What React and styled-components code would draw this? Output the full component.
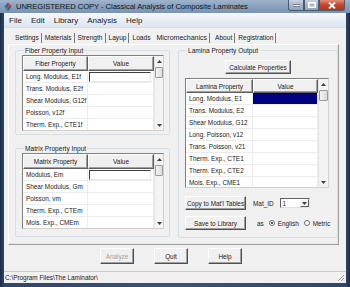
import React from 'react';
import styled, { createGlobalStyle } from 'styled-components';

const Global = createGlobalStyle`
  html, body { margin: 0; padding: 0; }
  body { width: 350px; height: 287px; overflow: hidden; font-family: "Liberation Sans", Arial, sans-serif; }
  * { box-sizing: border-box; }
`;

const Window = styled.div`
  width: 350px;
  height: 287px;
  display: flex;
  flex-direction: column;
  background: linear-gradient(to right, #1c2c48 0, #2f4668 4px, #3b5274 50%, #2f4668 calc(100% - 4px), #1c2c48 100%);
`;

const TitleBar = styled.div`
  height: 13px;
  display: flex;
  align-items: center;
  padding-left: 3px;
  background: linear-gradient(to bottom, #9fb3cb 0%, #8aa2be 45%, #7a93b2 100%);
`;

const TitleText = styled.span`
  font-size: 7.6px;
  color: #101820;
  margin-left: 3px;
  white-space: nowrap;
  letter-spacing: -0.05px;
`;

const Caption = styled.div`
  margin-left: auto;
  display: flex;
  align-self: flex-start;
  margin-right: 5px;
`;

const CapBtn = styled.div`
  width: ${p => p.$w}px;
  height: 11px;
  display: flex;
  align-items: center;
  justify-content: center;
  border: 1px solid #4a5a70;
  border-top: none;
  background: ${p => p.$close
    ? 'linear-gradient(to bottom, #e08a78 0%, #c7442c 50%, #b43520 100%)'
    : 'linear-gradient(to bottom, #c6d2e0 0%, #a7b8cc 50%, #8ea3bd 100%)'};
  border-radius: ${p => p.$r || '0'};
`;

const Body = styled.div`
  flex: 1;
  margin: 0 4px;
  background: #f0f0f0;
  display: flex;
  flex-direction: column;
  color: #1a1a1a;
`;

const MenuBar = styled.div`
  height: 15px;
  display: flex;
  align-items: center;
  background: linear-gradient(to bottom, #f6f8fb 0%, #e9eef6 50%, #dce5f2 100%);
  border-bottom: 1px solid #d8dee8;
  padding-left: 2px;
`;

const MenuItem = styled.span`
  font-size: 8px;
  padding: 0 3px;
  margin-right: 3px;
`;

const TabStrip = styled.div`
  height: 16px;
  display: flex;
  align-items: center;
  padding-left: 8px;
  padding-top: 4px;
`;

const Tab = styled.span`
  height: 10px;
  line-height: 10px;
  padding: 0 2px 0 3px;
  border-right: ${p => (p.$nosep ? '1px solid transparent' : '1px solid #7a7a7a')};
  margin-right: ${p => (p.$sel ? 2 : 0)}px;
  font-size: ${p => (p.$sel ? '7px' : '6.6px')};
`;

const Panel = styled.div`
  height: 201px;
  margin: 0 7px 0 4px;
  border-left: 1px solid #ffffff;
  border-top: 1px solid #ffffff;
  border-right: 1px solid #a0a0a0;
  border-bottom: 1px solid #a0a0a0;
  box-shadow: inset -1px -1px 0 #e3e3e3;
  display: flex;
  gap: 8px;
  padding: 2px 0 0 6px;
`;

const Column = styled.div`
  display: flex;
  flex-direction: column;
  gap: ${p => p.$gap || 0}px;
  width: ${p => p.$w}px;
`;

const Group = styled.fieldset`
  margin: 0;
  border: 1px solid #d5dfe5;
  border-radius: 2px;
  padding: 0 0 0 6px;
  height: ${p => p.$h}px;
  min-width: 0;
  display: flex;
  flex-direction: column;
`;

const Legend = styled.legend`
  font-size: 6.6px;
  padding: 0 1px;
  margin-left: 2px;
  line-height: 7px;
`;

const Grid = styled.div`
  display: flex;
  border: 1px solid #808080;
  border-right-color: #d0d0d0;
  border-bottom-color: #d0d0d0;
  background: #fff;
  width: ${p => p.$w}px;
  height: ${p => p.$h}px;
  margin-top: ${p => p.$mt || 0}px;
  overflow: hidden;
`;

const Table = styled.div`
  flex: 1;
  display: grid;
  grid-template-columns: ${p => p.$cols};
  grid-auto-rows: 12px;
  grid-template-rows: ${p => p.$hh}px;
  align-content: start;
`;

const HeadCell = styled.div`
  font-size: 6.4px;
  display: flex;
  align-items: center;
  justify-content: center;
  background: #f0f0f0;
  border-top: 1px solid #fff;
  border-left: 1px solid #fff;
  border-right: 1px solid #606060;
  border-bottom: 1px solid #606060;
  box-shadow: inset -1px -1px 0 #a0a0a0;
`;

const Cell = styled.div`
  font-size: 6.4px;
  display: flex;
  align-items: center;
  padding-left: 3px;
  border-right: 1px solid #ececec;
  border-bottom: 1px solid #ececec;
  white-space: nowrap;
  overflow: hidden;
  background: ${p => (p.$sel ? '#000080' : '#fff')};
`;

const EditBox = styled.div`
  width: 100%;
  height: 10px;
  margin: 0 1px 0 -2px;
  border-top: 1px solid #404040;
  border-left: 1px solid #404040;
  border-bottom: 1px solid #e8e8e8;
  border-right: 1px solid #e8e8e8;
  background: #fff;
`;

const ScrollBar = styled.div`
  width: 11px;
  display: flex;
  flex-direction: column;
  background: #f3f3f3;
  border-left: 1px solid #e4e4e4;
`;

const Arrow = styled.div`
  height: 10px;
  display: flex;
  align-items: center;
  justify-content: center;
`;

const Thumb = styled.div`
  height: 11px;
  margin: 1px 0;
  border: 1px solid #9a9a9a;
  border-radius: 1px;
  background: linear-gradient(to right, #f4f4f4, #dcdcdc);
`;

const Track = styled.div`
  flex: 1;
`;

const Button = styled.div`
  width: ${p => p.$w}px;
  height: ${p => p.$h || 14}px;
  font-size: 6.4px;
  color: ${p => (p.$disabled ? '#a0a0a0' : '#1a1a1a')};
  display: flex;
  align-items: center;
  justify-content: center;
  background: #f0f0f0;
  border-top: 1px solid #fff;
  border-left: 1px solid #fff;
  border-right: 1px solid #505050;
  border-bottom: 1px solid #505050;
  box-shadow: inset -1px -1px 0 #a0a0a0;
  white-space: nowrap;
`;

const CalcRow = styled.div`
  display: flex;
  justify-content: center;
  padding-right: 6px;
  margin-top: 6px;
`;

const ControlRow = styled.div`
  display: flex;
  align-items: center;
  margin-top: ${p => p.$mt}px;
`;

const Label = styled.span`
  font-size: 6.4px;
  margin-left: ${p => p.$ml || 0}px;
  white-space: nowrap;
`;

const Select = styled.div`
  width: 30px;
  height: 10px;
  margin-left: 6px;
  display: flex;
  border-top: 1px solid #606060;
  border-left: 1px solid #606060;
  border-right: 1px solid #e0e0e0;
  border-bottom: 1px solid #e0e0e0;
  background: #fff;
  font-size: 6.4px;
  align-items: center;
`;

const SelectText = styled.span`
  flex: 1;
  padding-left: 2px;
`;

const DropBtn = styled.div`
  width: 9px;
  height: 100%;
  display: flex;
  align-items: center;
  justify-content: center;
  background: #f0f0f0;
  border-top: 1px solid #fff;
  border-left: 1px solid #fff;
  border-right: 1px solid #606060;
  border-bottom: 1px solid #606060;
`;

const Radio = styled.span`
  width: 6px;
  height: 6px;
  border-radius: 50%;
  border: 1px solid #707070;
  background: #fff;
  margin-left: ${p => p.$ml}px;
  margin-right: 3px;
  display: inline-flex;
  align-items: center;
  justify-content: center;
  &::after {
    content: '';
    width: 2px;
    height: 2px;
    border-radius: 50%;
    background: ${p => (p.$on ? '#202020' : 'transparent')};
  }
`;

const BottomRow = styled.div`
  display: flex;
  gap: 20px;
  padding-left: 96px;
  margin-top: 3px;
  height: 16px;
`;

const StatusBar = styled.div`
  margin-top: auto;
  height: 12px;
  border-top: 1px solid #c8c8c8;
  display: flex;
  align-items: center;
  padding-left: 1px;
  position: relative;
`;

const StatusText = styled.span`
  font-size: 6.4px;
`;

const Grip = styled.svg`
  position: absolute;
  right: 1px;
  bottom: 1px;
`;

const BottomFrame = styled.div`
  height: 4px;
`;

const UpArrow = () => (
  <svg width="5" height="3" viewBox="0 0 5 3"><path d="M2.5 0 L5 3 L0 3 Z" fill="#404040" /></svg>
);
const DownArrow = () => (
  <svg width="5" height="3" viewBox="0 0 5 3"><path d="M0 0 L5 0 L2.5 3 Z" fill="#404040" /></svg>
);

const Scroll = () => (
  <ScrollBar>
    <Arrow><UpArrow /></Arrow>
    <Thumb />
    <Track />
    <Arrow><DownArrow /></Arrow>
  </ScrollBar>
);

function PropGrid({ title, rows, w, h, cols, hh, mt, selFirst }) {
  return (
    <Grid $w={w} $h={h} $mt={mt}>
      <Table $cols={cols} $hh={hh}>
        <HeadCell>{title}</HeadCell>
        <HeadCell>Value</HeadCell>
        {rows.map((r, i) => (
          <React.Fragment key={r}>
            <Cell>{r}</Cell>
            {i === 0 && selFirst ? (
              <Cell $sel />
            ) : i === 0 ? (
              <Cell><EditBox /></Cell>
            ) : (
              <Cell />
            )}
          </React.Fragment>
        ))}
      </Table>
      <Scroll />
    </Grid>
  );
}

const AppIcon = () => (
  <svg width="10" height="10" viewBox="0 0 10 10">
    <path d="M5 0.5 L8.5 4.5 L5 9.5 L1.5 4.5 Z" fill="#2a60c0" />
    <path d="M5 0.5 L8.5 4.5 L5 5.5 Z" fill="#e03a3a" />
    <path d="M1.5 4.5 L5 5.5 L5 9.5 Z" fill="#3a9a3a" />
  </svg>
);

export default function App() {
  const tabs = ['Settings', 'Materials', 'Strength', 'Layup', 'Loads', 'Micromechanics', 'About', 'Registration'];
  return (
    <>
      <Global />
      <Window>
        <TitleBar>
          <AppIcon />
          <TitleText>UNREGISTERED COPY - Classical Analysis of Composite Laminates</TitleText>
          <Caption>
            <CapBtn $w={16} $r="0 0 0 3px">
              <svg width="7" height="3" viewBox="0 0 7 3"><rect x="0" y="0.5" width="7" height="2" fill="#fff" stroke="#333" strokeWidth="0.5" /></svg>
            </CapBtn>
            <CapBtn $w={15}>
              <svg width="8" height="6" viewBox="0 0 8 6"><rect x="0.75" y="0.75" width="6.5" height="4.5" fill="none" stroke="#fff" strokeWidth="1.5" /></svg>
            </CapBtn>
            <CapBtn $w={26} $close $r="0 0 3px 0">
              <svg width="8" height="7" viewBox="0 0 8 7"><path d="M1 0.5 L7 6.5 M7 0.5 L1 6.5" stroke="#fff" strokeWidth="1.8" /></svg>
            </CapBtn>
          </Caption>
        </TitleBar>
        <Body>
          <MenuBar>
            <MenuItem>File</MenuItem>
            <MenuItem>Edit</MenuItem>
            <MenuItem>Library</MenuItem>
            <MenuItem>Analysis</MenuItem>
            <MenuItem>Help</MenuItem>
          </MenuBar>
          <TabStrip>
            {tabs.map(t => (
              <Tab key={t} $nosep={t === 'Loads'} $sel={t === 'Micromechanics'}>{t}</Tab>
            ))}
          </TabStrip>
          <Panel>
            <Column $w={155} $gap={10}>
              <Group $h={88}>
                <Legend>Fiber Property Input</Legend>
                <PropGrid
                  title="Fiber Property"
                  rows={['Long. Modulus, E1f', 'Trans. Modulus, E2f', 'Shear Modulus, G12f', 'Poisson, v12f', 'Therm. Exp., CTE1f']}
                  w={142} h={76} cols="65px 66px" hh={15} mt={1}
                />
              </Group>
              <Group $h={92}>
                <Legend>Matrix Property Input</Legend>
                <PropGrid
                  title="Matrix Property"
                  rows={['Modulus, Em', 'Shear Modulus, Gm', 'Poisson, vm', 'Therm. Exp., CTEm', 'Mois. Exp., CMEm']}
                  w={142} h={76} cols="65px 66px" hh={15} mt={1}
                />
              </Group>
            </Column>
            <Column $w={160}>
              <Group $h={191}>
                <Legend>Lamina Property Output</Legend>
                <CalcRow>
                  <Button $w={66} $h={14}>Calculate Properties</Button>
                </CalcRow>
                <PropGrid
                  title="Lamina Property"
                  rows={['Long. Modulus, E1', 'Trans. Modulus, E2', 'Shear Modulus, G12', 'Long. Poisson, v12', 'Trans. Poisson, v21', 'Therm. Exp., CTE1', 'Therm. Exp., CTE2', 'Mois. Exp., CME1']}
                  w={144} h={110} cols="67px 65px" hh={14} mt={4} selFirst
                />
                <ControlRow $mt={8}>
                  <Button $w={61} $h={14}>Copy to Mat'l Tables</Button>
                  <Label $ml={7}>Mat_ID</Label>
                  <Select>
                    <SelectText>1</SelectText>
                    <DropBtn><DownArrow /></DropBtn>
                  </Select>
                </ControlRow>
                <ControlRow $mt={6}>
                  <Button $w={61} $h={14}>Save to Library</Button>
                  <Label $ml={11}>as</Label>
                  <Radio $ml={5} $on />
                  <Label>English</Label>
                  <Radio $ml={5} />
                  <Label>Metric</Label>
                </ControlRow>
              </Group>
            </Column>
          </Panel>
          <BottomRow>
            <Button $w={34} $h={16} $disabled>Analyze</Button>
            <Button $w={34} $h={16}>Quit</Button>
            <Button $w={34} $h={16}>Help</Button>
          </BottomRow>
          <StatusBar>
            <StatusText>C:\Program Files\The Laminator\</StatusText>
            <Grip width="8" height="8" viewBox="0 0 8 8">
              <path d="M7 1 L1 7 M7 4 L4 7 M7 6.5 L6.5 7" stroke="#a0a0a0" strokeWidth="1" />
            </Grip>
          </StatusBar>
        </Body>
        <BottomFrame />
      </Window>
    </>
  );
}
